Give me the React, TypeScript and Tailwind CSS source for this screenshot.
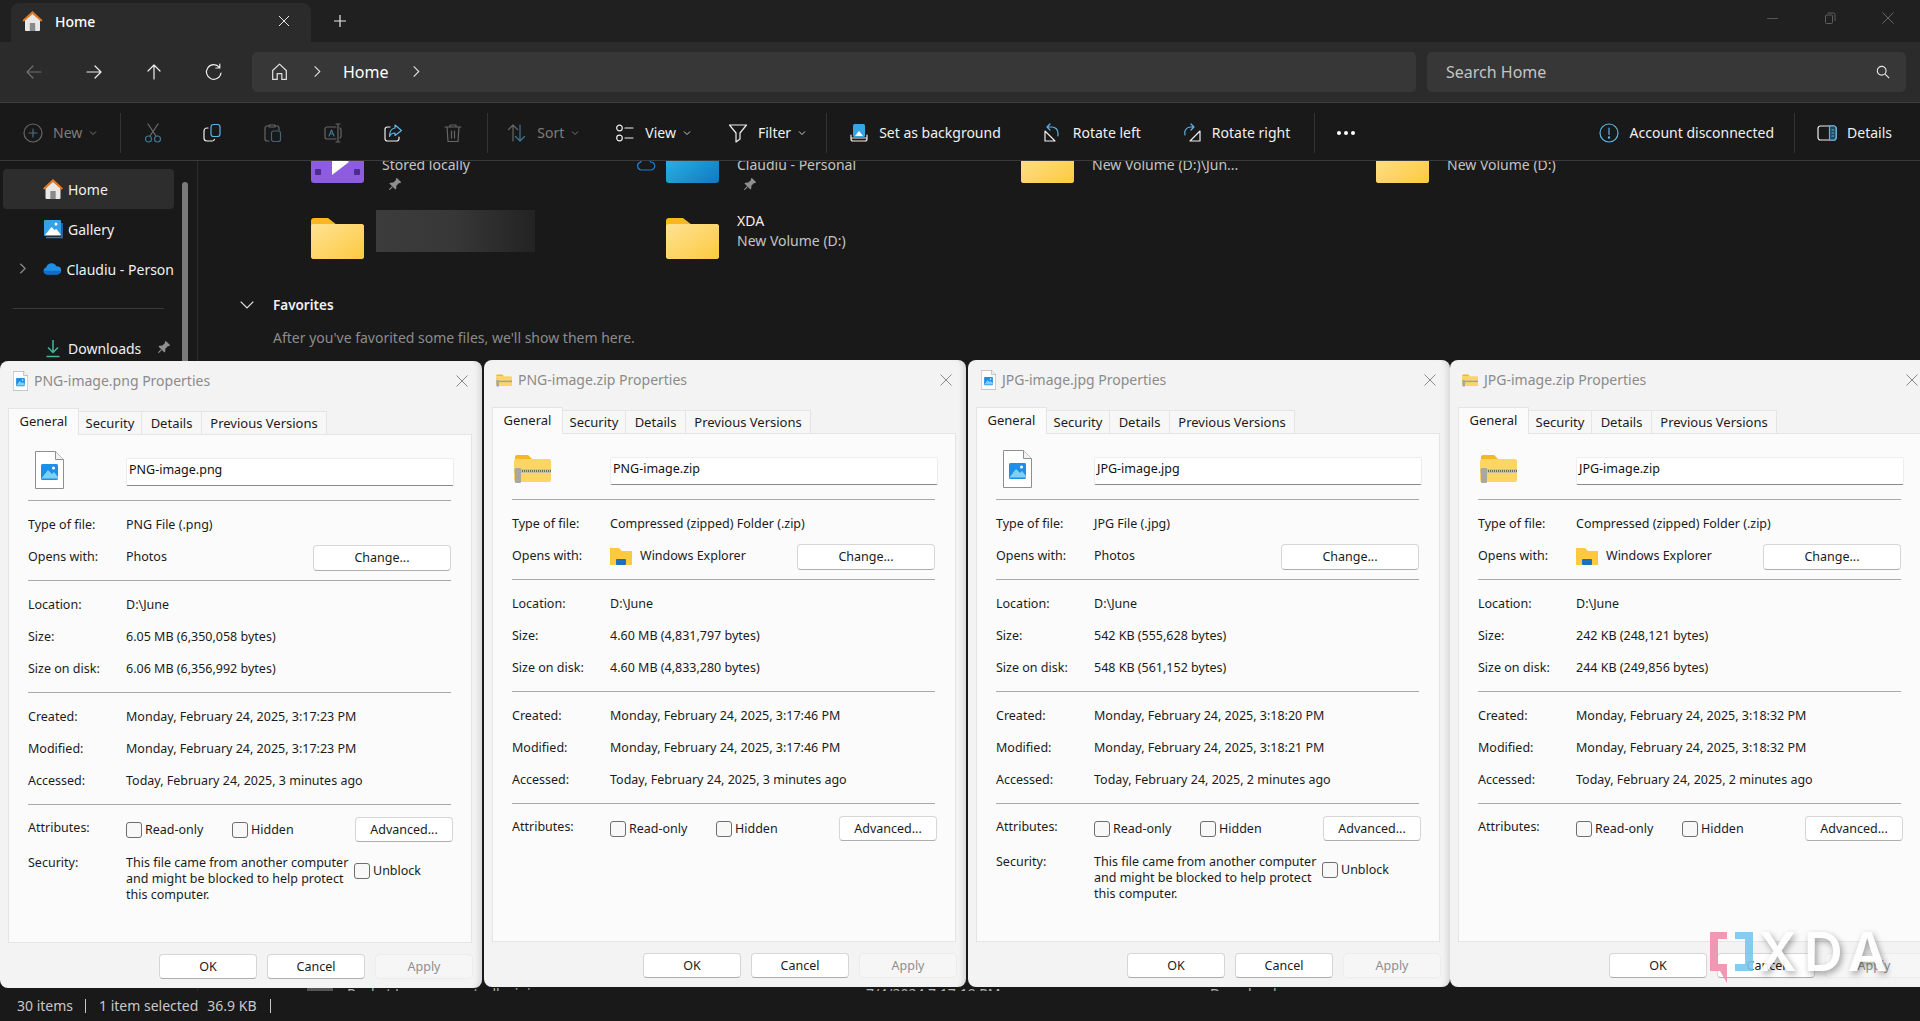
import type { ReactNode } from 'react';

/* Windows 11 File Explorer with four Properties dialogs on top */

function Folder({ className = 'w-[53px] h-[42px]' }: { className?: string }) {
  return (
    <svg viewBox="0 0 53 42" className={className}>
      <path d="M0 4a3 3 0 0 1 3-3h14l9 7v6H0z" fill="#f5b81f" />
      <rect y="7" width="53" height="35" rx="3" fill="#fbd15f" />
      <rect y="7" width="53" height="35" rx="3" fill="url(#folderShade)" />
      <defs>
        <linearGradient id="folderShade" x1="0" y1="0" x2="1" y2="1">
          <stop offset="0" stopColor="#ffe294" />
          <stop offset="1" stopColor="#fcc93f" />
        </linearGradient>
      </defs>
    </svg>
  );
}

function HomeColor({ className = 'w-5 h-5' }: { className?: string }) {
  return (
    <svg viewBox="0 0 20 20" className={`shrink-0 ${className}`}>
      <path d="M2.500 9 10 2.500 17.500 9v10a1 1 0 0 1-1 1h-13a1 1 0 0 1-1-1z" fill="#e8e8e8" />
      <rect x="7.300" y="12" width="5.400" height="8" fill="#8a8a8a" />
      <path d="M10 0 0 9.200l1.300 1.500L10 3l8.700 7.700L20 9.200z" fill="#e57a25" />
    </svg>
  );
}

function Pin({ className = '' }: { className?: string }) {
  return (
    <svg viewBox="0 0 15 15" className={`w-[14px] h-[14px] shrink-0 ${className}`}>
      <g transform="rotate(45 7.500 7.500)" fill="#8f8f8f">
        <path d="M4.200 0h6.600v1.400l-1 .8v4l2.200 2.400v1.300H3V8.600l2.200-2.400v-4l-1-.8z" />
        <path d="M6.900 9.900h1.200V14l-.6 1.200-.6-1.200z" />
      </g>
    </svg>
  );
}

function Stroke({ children, size = 20, className = '' }: { children: ReactNode; size?: number; className?: string }) {
  return (
    <svg
      viewBox="0 0 20 20"
      width={size}
      height={size}
      fill="none"
      strokeWidth="1.200"
      strokeLinecap="round"
      strokeLinejoin="round"
      className={`shrink-0 ${className}`}
    >
      {children}
    </svg>
  );
}

function Chevron({ color = '#bdbdbd' }: { color?: string }) {
  return (
    <svg viewBox="0 0 8 8" className="w-2 h-2 shrink-0 -ml-[3px]" fill="none" stroke={color} strokeWidth="1">
      <path d="M1 2.500 4 5.500 7 2.500" />
    </svg>
  );
}

function Sep({ className = '' }: { className?: string }) {
  return <div className={`w-px h-10 bg-[#333333] shrink-0 ${className}`} />;
}

function Tool({ label, icon, caret, dim, className = '' }: { label: string; icon: ReactNode; caret?: boolean; dim?: boolean; className?: string }) {
  return (
    <div className={`flex items-center gap-[10px] shrink-0 ${dim ? 'text-[#7d7d7d]' : 'text-[#f0f0f0]'} ${className}`}>
      {icon}
      <span>{label}</span>
      {caret && <Chevron color={dim ? '#777777' : '#cccccc'} />}
    </div>
  );
}

function ChevronRight() {
  return (
    <svg viewBox="0 0 8 14" className="w-2 h-[13px]" fill="none" stroke="currentColor" strokeWidth="1.200">
      <path d="M1.500 1.500 7 7l-5.500 5.500" />
    </svg>
  );
}

function TopBar() {
  return (
    <>
      <div className="h-[42px] bg-[#202020] flex items-end pl-[11px] text-white">
        <div className="w-[300px] h-[39px] bg-[#2b2b2b] rounded-t-lg flex items-center pl-[11px] pb-[3px]">
          <HomeColor className="w-[21px] h-5" />
          <span className="ml-[12px] text-[14px] font-medium">Home</span>
          <svg viewBox="0 0 12 12" className="w-3 h-3 ml-auto mr-[21px]" fill="none" stroke="#e8e8e8" strokeWidth="1">
            <path d="M1 1l10 10M11 1 1 11" />
          </svg>
        </div>
        <svg viewBox="0 0 12 12" className="w-3 h-3 ml-[23px] mb-[15px]" fill="none" stroke="#e8e8e8" strokeWidth="1.200">
          <path d="M6 0v12M0 6h12" />
        </svg>
        <div className="ml-auto flex items-center h-full pb-[6px] pr-[26px] gap-[46px]">
          <div className="w-[11px] h-px bg-[#555555]" />
          <svg viewBox="0 0 12 12" className="w-3 h-3" fill="none" stroke="#5e5e5e" strokeWidth="1">
            <rect x="1.500" y="3" width="7" height="8.500" rx="1" />
            <path d="M3.500 1h6a1.500 1.500 0 0 1 1.500 1.500V9" />
          </svg>
          <svg viewBox="0 0 12 12" className="w-3 h-3" fill="none" stroke="#666666" strokeWidth="1">
            <path d="M.500.500l11 11M11.500.500l-11 11" />
          </svg>
        </div>
      </div>
      <div className="h-[61px] bg-[#2b2b2b] border-b border-[#3d3d3d] flex items-center pb-[1px] text-white">
        <div className="flex items-center gap-[40px] pl-[24px] w-[252px] shrink-0">
          <Stroke><path d="M17 10H3M9 4l-6 6 6 6" stroke="#6f6f6f" /></Stroke>
          <Stroke><path d="M3 10h14M11 4l6 6-6 6" stroke="#eeeeee" /></Stroke>
          <Stroke><path d="M10 17V3M4 9l6-6 6 6" stroke="#eeeeee" /></Stroke>
          <Stroke><path d="M15.500 5.500A7.300 7.300 0 1 0 17 11M15.800 2v4h-4" stroke="#eeeeee" /></Stroke>
        </div>
        <div className="w-[1164px] h-10 rounded-[5px] bg-[#373737] flex items-center pl-[17px] text-[16px] shrink-0">
          <Stroke size={21}><path d="M3.500 9 10 3l6.500 6v8.500h-4.300V12H7.800v5.500H3.500z" stroke="#dddddd" /></Stroke>
          <span className="ml-[23px] text-[#dddddd]"><ChevronRight /></span>
          <span className="ml-[22px]">Home</span>
          <span className="ml-[23px] text-[#dddddd]"><ChevronRight /></span>
        </div>
        <div className="ml-[11px] w-[479px] h-10 rounded-[5px] bg-[#373737] flex items-center pl-[19px] pr-[16px] text-[16px] text-[#c4c4c4] shrink-0">
          <span>Search Home</span>
          <svg viewBox="0 0 16 16" className="w-[14px] h-[14px] ml-auto" fill="none" stroke="#e6e6e6" strokeWidth="1.300">
            <circle cx="6.500" cy="6.500" r="5" />
            <path d="m10.500 10.500 4.500 4.500" />
          </svg>
        </div>
      </div>
    </>
  );
}

function Toolbar() {
  return (
    <div className="h-[58px] bg-[#191919] border-b border-[#3b3b3b] flex items-center pt-[3px] text-[14px] leading-5">
      <Tool
        dim
        caret
        label="New"
        className="ml-[23px]"
        icon={
          <Stroke>
            <circle cx="10" cy="10" r="9" stroke="#666666" />
            <path d="M10 6v8M6 10h8" stroke="#4c6f80" />
          </Stroke>
        }
      />
      <Sep className="ml-[23px]" />
      <Stroke className="ml-[22px]">
        <path d="M5 1l8 12M15 1 7 13" stroke="#6e6e6e" />
        <circle cx="5.500" cy="16" r="3" stroke="#3f7592" />
        <circle cx="14.500" cy="16" r="3" stroke="#3f7592" />
      </Stroke>
      <Stroke className="ml-[39px]">
        <rect x="9" y="1.500" width="9" height="12" rx="2.500" stroke="#5cb4e6" />
        <path d="M6 5H5a3 3 0 0 0-3 3v7a3 3 0 0 0 3 3h5a3 3 0 0 0 2.500-1.500" stroke="#eeeeee" />
      </Stroke>
      <Stroke className="ml-[41px]">
        <path d="M6 3H4a2 2 0 0 0-2 2v11a2 2 0 0 0 2 2h2M12 3h2a2 2 0 0 1 2 2v2M6 2h6v2H6z" stroke="#666666" />
        <rect x="8.500" y="8" width="9" height="10.500" rx="2" stroke="#3f6478" />
      </Stroke>
      <Stroke className="ml-[40px]">
        <path d="M13 4H4a2 2 0 0 0-2 2v8a2 2 0 0 0 2 2h9M17 5a2 2 0 0 1 1 1.500v7a2 2 0 0 1-1 1.500M13 1h4M13 19h4M15 1v18" stroke="#666666" />
        <path d="M6 13l2.500-6L11 13M7 11h3" stroke="#3f7592" />
      </Stroke>
      <Stroke className="ml-[40px]">
        <path d="M7 4H4.500A2.500 2.500 0 0 0 2 6.500v9A2.500 2.500 0 0 0 4.500 18h9a2.500 2.500 0 0 0 2.500-2.500V14" stroke="#eeeeee" />
        <path d="M12 2l6.500 5.500-6.500 5V10C9.500 10 7.500 11 6.500 13.500 6.500 9 8.500 5.500 12 5z" stroke="#5cb4e6" />
      </Stroke>
      <Stroke className="ml-[40px]">
        <path d="M2 4h16M7 4V2h6v2M4 4l1 14.500h10L16 4M8.500 8v7M11.500 8v7" stroke="#666666" />
      </Stroke>
      <Sep className="ml-[24px]" />
      <Tool
        dim
        caret
        label="Sort"
        className="ml-[19px]"
        icon={
          <Stroke>
            <path d="M6 18V2M1.500 6.500 6 2l4.500 4.500" stroke="#666666" />
            <path d="M13 2v16M8.500 13.500 13 18l4.500-4.500" stroke="#3f7592" />
          </Stroke>
        }
      />
      <Tool
        caret
        label="View"
        className="ml-[36px]"
        icon={
          <Stroke>
            <circle cx="4.500" cy="5" r="2.800" stroke="#eeeeee" />
            <circle cx="4.500" cy="15" r="2.800" stroke="#eeeeee" />
            <path d="M10 5h8M10 15h8" stroke="#eeeeee" />
          </Stroke>
        }
      />
      <Tool
        caret
        label="Filter"
        className="ml-[37px]"
        icon={<Stroke><path d="M1.500 2h17l-6.500 8v6l-4 3v-9z" stroke="#eeeeee" /></Stroke>}
      />
      <Sep className="ml-[20px]" />
      <Tool
        label="Set as background"
        className="ml-[22px]"
        icon={
          <Stroke>
            <rect x="4" y="1" width="12" height="13" rx="1.500" fill="#37a4e4" stroke="none" />
            <path d="M6 13l4-5 4 5z" fill="#ffffff" stroke="none" />
            <path d="M2 12v4a2 2 0 0 0 2 2h12a2 2 0 0 0 2-2v-4M2 15h16" stroke="#eeeeee" />
          </Stroke>
        }
      />
      <Tool
        label="Rotate left"
        className="ml-[42px]"
        icon={
          <Stroke>
            <path d="M2 18V8l10 10z" stroke="#eeeeee" />
            <path d="M7 1 4 4l3 3M4 4h5a6 6 0 0 1 6 6v3" stroke="#5cb4e6" />
          </Stroke>
        }
      />
      <Tool
        label="Rotate right"
        className="ml-[41px]"
        icon={
          <Stroke>
            <path d="M18 18V8L8 18z" stroke="#eeeeee" />
            <path d="M9 1l3 3-3 3M12 4H8a6 6 0 0 0-5 8" stroke="#5cb4e6" />
          </Stroke>
        }
      />
      <Sep className="ml-[24px]" />
      <div className="ml-[22px] flex gap-[3px]">
        <i className="block w-[4px] h-[4px] rounded-full bg-white" />
        <i className="block w-[4px] h-[4px] rounded-full bg-white" />
        <i className="block w-[4px] h-[4px] rounded-full bg-white" />
      </div>
      <Tool
        label="Account disconnected"
        className="ml-auto"
        icon={
          <Stroke className="mr-[1px]">
            <circle cx="10" cy="10" r="9" stroke="#5cb4e6" />
            <path d="M10 5v6.500" stroke="#5cb4e6" />
            <circle cx="10" cy="14.500" r=".6" fill="#5cb4e6" stroke="#5cb4e6" />
          </Stroke>
        }
      />
      <Sep className="ml-[20px]" />
      <Tool
        label="Details"
        className="ml-[22px] mr-[28px]"
        icon={
          <Stroke>
            <rect x="1" y="3" width="18" height="14" rx="2.500" stroke="#eeeeee" />
            <path d="M12.500 3v14h4.500a2 2 0 0 0 2-2V5a2 2 0 0 0-2-2z" fill="#1f4a63" stroke="#5cb4e6" />
            <path d="M15 7h1.500M15 10h1.500M15 13h1.500" stroke="#5cb4e6" />
          </Stroke>
        }
      />
    </div>
  );
}

function NavRow({ icon, label, pin, selected, caret }: { icon: ReactNode; label: string; pin?: boolean; selected?: boolean; caret?: boolean }) {
  return (
    <div className={`relative h-10 ml-[3px] w-[171px] rounded flex items-center pl-[40px] text-[14px] whitespace-nowrap ${selected ? 'bg-[#2d2d2d]' : ''}`}>
      {caret && (
        <span className="absolute left-[16px] top-[13px] text-[#8a8a8a]">
          <svg viewBox="0 0 8 14" className="w-[7px] h-[13px]" fill="none" stroke="currentColor" strokeWidth="1.500">
            <path d="M1.500 1.500 7 7l-5.500 5.500" />
          </svg>
        </span>
      )}
      {icon}
      <span className="ml-[5px] text-[#f0f0f0]">{label}</span>
      {pin && <Pin className="ml-[15px]" />}
    </div>
  );
}

function Sidebar() {
  return (
    <div className="relative w-[198px] shrink-0 border-r border-[#2c2c2c] overflow-hidden pt-[8px]">
      <NavRow selected icon={<HomeColor />} label="Home" />
      <NavRow
        icon={
          <svg viewBox="0 0 20 20" className="w-5 h-5">
            <rect x="1" y="1" width="17" height="16" rx="1" fill="#35a1e6" />
            <path d="M2 16l6.500-8 3 3 2-1 4.500 6z" fill="#ffffff" />
            <circle cx="13" cy="5" r="1.500" fill="#ffffff" />
            <path d="M3 18.500h16V4" fill="none" stroke="#2c77c4" strokeWidth="1.500" />
          </svg>
        }
        label="Gallery"
      />
      <NavRow
        caret
        icon={
          <svg viewBox="0 0 20 14" className="w-5 h-[14px]">
            <path d="M4 13a4 4 0 0 1-.500-7.800A6 6 0 0 1 14.600 4 4.500 4.500 0 0 1 16 13z" fill="#1f8fe6" />
            <path d="M4 13a4 4 0 0 1-3-4h18a4 4 0 0 1-3 4z" fill="#0f6cc9" />
          </svg>
        }
        label="Claudiu - Person"
      />
      <div className="h-px w-[151px] ml-[13px] my-[19px] bg-[#3a3a3a]" />
      <NavRow
        pin
        icon={
          <svg viewBox="0 0 20 20" className="w-5 h-5" fill="none" stroke="#3fb89a" strokeWidth="1.500">
            <path d="M10 2v12M5 9.500l5 5 5-5M3.500 18.500h13" />
          </svg>
        }
        label="Downloads"
      />
      <div className="absolute left-[182px] top-[21px] w-[6px] h-[300px] rounded-full bg-[#7a7a7a]" />
    </div>
  );
}

function QuickItem({ icon, title, sub, pin, cloud }: { icon: ReactNode; title?: string; sub?: string; pin?: boolean; cloud?: boolean }) {
  return (
    <div className="relative flex gap-[18px]">
      {cloud && (
        <svg viewBox="0 0 20 14" className="absolute -left-[30px] top-[22px] w-5 h-[14px]" fill="none" stroke="#1f7fd0" strokeWidth="1.200">
          <path d="M5 13a4 4 0 0 1-.500-7.800A5.500 5.500 0 0 1 14.600 5 4 4 0 0 1 15 13z" />
        </svg>
      )}
      <div className="pt-[6px] shrink-0">{icon}</div>
      <div className="text-[14px] leading-5 whitespace-nowrap">
        <p className="h-5 text-[#f0f0f0]">{title}</p>
        <p className="text-[#c4c4c4]">{sub}</p>
        {pin && <Pin className="mt-[3px] ml-[5px]" />}
      </div>
    </div>
  );
}

function Explorer() {
  return (
    <div className="flex-1 flex min-h-0 bg-[#191919]">
      <Sidebar />
      <div className="relative flex-1 overflow-hidden">
        <div className="-mt-[26px] ml-[113px] grid grid-cols-[355px_355px_355px_355px] auto-rows-[76px]">
          <QuickItem
            pin
            sub="Stored locally"
            icon={
              <svg viewBox="0 0 53 42" className="w-[53px] h-[42px]">
                <rect width="53" height="42" rx="3" fill="#8e5ce0" />
                <path d="M21 8l17 13-17 13z" fill="#ffffff" />
                <g fill="#4d2d8c">
                  <rect x="4" y="6" width="6" height="6" rx="1" />
                  <rect x="4" y="28" width="6" height="6" rx="1" />
                  <rect x="43" y="6" width="6" height="6" rx="1" />
                  <rect x="43" y="28" width="6" height="6" rx="1" />
                </g>
              </svg>
            }
          />
          <QuickItem
            pin
            cloud
            sub="Claudiu - Personal"
            icon={
              <svg viewBox="0 0 53 42" className="w-[53px] h-[42px]">
                <defs>
                  <linearGradient id="blueFolder" x1="0" y1="0" x2="1" y2="1">
                    <stop offset="0" stopColor="#35c0e6" />
                    <stop offset="1" stopColor="#0d79c4" />
                  </linearGradient>
                </defs>
                <rect width="53" height="42" rx="3" fill="url(#blueFolder)" />
              </svg>
            }
          />
          <QuickItem sub="New Volume (D:)\Jun..." icon={<Folder />} />
          <QuickItem sub="New Volume (D:)" icon={<Folder />} />
          <div className="flex gap-[12px]">
            <div className="pt-[6px] shrink-0"><Folder /></div>
            <div className="w-[159px] h-[42px] -mt-px bg-gradient-to-r from-[#3c3c3c] via-[#373737] to-[#232323]" />
          </div>
          <QuickItem title="XDA" sub="New Volume (D:)" icon={<Folder />} />
        </div>
        <div className="flex items-center h-5 mt-[8px] pl-[42px] text-[13.500px]">
          <svg viewBox="0 0 14 8" className="w-[14px] h-2" fill="none" stroke="#e8e8e8" strokeWidth="1.200">
            <path d="M.700.700 7 7l6.300-6.300" />
          </svg>
          <span className="ml-[19px] font-semibold text-[#f0f0f0]">Favorites</span>
        </div>
        <p className="mt-[13px] pl-[75px] text-[14px] leading-5 text-[#8c8c8c]">After you've favorited some files, we'll show them here.</p>
        {/* list row that peeks out under the dialogs */}
        <div className="absolute left-[-198px] right-0 bottom-[-12px] h-5 flex items-center text-[14px] text-[#b4b4b4] whitespace-nowrap">
          <div className="ml-[54px] w-[18px] h-[14px] bg-[#d8c26c]" />
          <span className="ml-[7px] w-[228px]">My Folder</span>
          <div className="w-[26px] h-[14px] bg-[#555555]" />
          <span className="ml-[14px] w-[519px]">Rocket.League_controller.ini</span>
          <span className="w-[344px]">7/4/2024 7:17:19 PM</span>
          <span>Downloads</span>
        </div>
      </div>
    </div>
  );
}

function StatusBar() {
  return (
    <div className="h-[30px] bg-[#191919] flex items-center pl-[17px] pb-[1px] text-[14px] text-[#c8c8c8] relative">
      <span className="w-[68px]">30 items</span>
      <div className="w-px h-[14px] bg-[#c8c8c8]" />
      <span className="ml-[13px]">1 item selected</span>
      <span className="ml-[9px]">36.9 KB</span>
      <div className="ml-[13px] w-px h-[14px] bg-[#c8c8c8]" />
    </div>
  );
}

type DialogData = {
  left: string;
  top: string;
  name: string;
  type: string;
  zip: boolean;
  size: string;
  onDisk: string;
  created: string;
  modified: string;
  accessed: string;
  blocked: boolean;
};

const dialogs: DialogData[] = [
  {
    left: 'left-0',
    top: 'top-[361px]',
    name: 'PNG-image.png',
    type: 'PNG File (.png)',
    zip: false,
    size: '6.05 MB (6,350,058 bytes)',
    onDisk: '6.06 MB (6,356,992 bytes)',
    created: 'Monday, February 24, 2025, 3:17:23 PM',
    modified: 'Monday, February 24, 2025, 3:17:23 PM',
    accessed: 'Today, February 24, 2025, 3 minutes ago',
    blocked: true,
  },
  {
    left: 'left-[484px]',
    top: 'top-[360px]',
    name: 'PNG-image.zip',
    type: 'Compressed (zipped) Folder (.zip)',
    zip: true,
    size: '4.60 MB (4,831,797 bytes)',
    onDisk: '4.60 MB (4,833,280 bytes)',
    created: 'Monday, February 24, 2025, 3:17:46 PM',
    modified: 'Monday, February 24, 2025, 3:17:46 PM',
    accessed: 'Today, February 24, 2025, 3 minutes ago',
    blocked: false,
  },
  {
    left: 'left-[968px]',
    top: 'top-[360px]',
    name: 'JPG-image.jpg',
    type: 'JPG File (.jpg)',
    zip: false,
    size: '542 KB (555,628 bytes)',
    onDisk: '548 KB (561,152 bytes)',
    created: 'Monday, February 24, 2025, 3:18:20 PM',
    modified: 'Monday, February 24, 2025, 3:18:21 PM',
    accessed: 'Today, February 24, 2025, 2 minutes ago',
    blocked: true,
  },
  {
    left: 'left-[1450px]',
    top: 'top-[360px]',
    name: 'JPG-image.zip',
    type: 'Compressed (zipped) Folder (.zip)',
    zip: true,
    size: '242 KB (248,121 bytes)',
    onDisk: '244 KB (249,856 bytes)',
    created: 'Monday, February 24, 2025, 3:18:32 PM',
    modified: 'Monday, February 24, 2025, 3:18:32 PM',
    accessed: 'Today, February 24, 2025, 2 minutes ago',
    blocked: false,
  },
];

function ImageFile({ small }: { small?: boolean }) {
  return (
    <svg viewBox="0 0 29 38" className={small ? 'w-[15px] h-5' : 'w-[29px] h-[38px]'}>
      <path d="M.500.500h20l8 8v29H.500z" fill="#ffffff" stroke="#8f8f8f" />
      <path d="M20.500.500v8h8" fill="#f2f2f2" stroke="#8f8f8f" />
      <rect x="6" y="13" width="17" height="16" rx="1.500" fill="#1f8fe6" />
      <path d="M6 28l7-9 4 4 2-2 4 5v1.500H6z" fill="#7fd0f5" />
      <circle cx="18.500" cy="17" r="1.500" fill="#ffffff" />
    </svg>
  );
}

function ZipFolder({ small }: { small?: boolean }) {
  return (
    <svg viewBox="0 0 37 30" className={small ? 'w-[18px] h-[15px]' : 'w-[37px] h-[30px]'}>
      <path d="M1 3a2 2 0 0 1 2-2h11l5 5H1z" fill="#f5b81f" />
      <rect x="0" y="5" width="37" height="23" rx="2" fill="#fdd567" />
      <rect x="0" y="15" width="37" height="4" fill="#c7c2a4" />
      <path d="M6 17h31" stroke="#6d6d62" strokeWidth="2" strokeDasharray="1 1" />
      <rect x="1" y="14" width="6" height="15" rx="1" fill="#a8a8a0" />
    </svg>
  );
}

function InfoRow({ label, children }: { label: string; children: ReactNode }) {
  return (
    <div className="h-8 flex items-center pt-[1px]">
      <span className="w-[98px] shrink-0">{label}</span>
      {children}
    </div>
  );
}

function Divider() {
  return <div className="h-px ml-[19px] w-[423px] bg-[#a9a9a9]" />;
}

function WinButton({ label, disabled, className = '' }: { label: string; disabled?: boolean; className?: string }) {
  return (
    <div className={`h-[25px] flex items-center justify-center rounded-[4px] border shrink-0 ${disabled ? 'border-[#ececec] text-[#8e8e8e] bg-[#f6f6f6]' : 'border-[#d6d6d6] border-b-[#aeaeae] bg-white text-[#1b1b1b]'} ${className}`}>
      {label}
    </div>
  );
}

function Check({ label, className = '' }: { label: string; className?: string }) {
  return (
    <div className={`flex items-center gap-[3px] shrink-0 ${className}`}>
      <div className="w-4 h-4 rounded-[3px] border border-[#6e6e6e] bg-[#f8f8f8]" />
      <span>{label}</span>
    </div>
  );
}

function Dialog({ d }: { d: DialogData }) {
  return (
    <div className={`absolute ${d.left} ${d.top} w-[482px] h-[627px] bg-[#f3f3f3] rounded-lg text-[12.500px] leading-4 text-[#1b1b1b] whitespace-nowrap shadow-[inset_-7px_0_6px_-5px_rgba(0,0,0,0.14)]`}>
      <div className="h-[40px] flex items-center pl-[12px] pr-[14px] text-[14px] text-[#8b8b8b]">
        <div className="w-[16px] flex justify-center">{d.zip ? <ZipFolder small /> : <ImageFile small />}</div>
        <span className="ml-[6px]">{d.name} Properties</span>
        <svg viewBox="0 0 12 12" className="w-3 h-3 ml-auto" fill="none" stroke="#8a8a8a" strokeWidth="1">
          <path d="M.500.500l11 11M11.500.500l-11 11" />
        </svg>
      </div>
      <div className="flex items-end h-[33px] pl-[8px] relative z-10 text-[13px]">
        <div className="w-[71px] h-[27px] -mb-px bg-[#fbfbfb] border border-b-0 border-[#e5e5e5] flex justify-center pt-[4px]">General</div>
        <div className="w-[63px] h-[23px] bg-[#f7f7f7] border-t border-r border-[#e5e5e5] flex items-center justify-center">Security</div>
        <div className="w-[60px] h-[23px] bg-[#f7f7f7] border-t border-r border-[#e5e5e5] flex items-center justify-center">Details</div>
        <div className="w-[125px] h-[23px] bg-[#f7f7f7] border-t border-r border-[#e5e5e5] flex items-center justify-center">Previous Versions</div>
      </div>
      <div className="mx-[8px] w-[464px] h-[509px] bg-[#fbfbfb] border border-[#e5e5e5]">
        <div className="h-[65px] flex items-start pl-[19px] pt-[23px]">
          <div className="w-[98px] -mt-[7px] pl-[7px] h-[38px]">{d.zip ? <div className="pt-[4px] -ml-[5px]"><ZipFolder /></div> : <ImageFile />}</div>
          <div className="w-[328px] h-[28px] bg-white border border-[#ededed] border-b-[#8a8a8a] rounded-[2px] pl-[2px] pt-[3px] text-[#111111]">{d.name}</div>
        </div>
        <Divider />
        <div className="pl-[19px] pt-[7px] pb-[8px]">
          <InfoRow label="Type of file:">{d.type}</InfoRow>
          <InfoRow label="Opens with:">
            {d.zip && (
              <svg viewBox="0 0 22 18" className="w-[22px] h-[18px] mr-[8px]">
                <path d="M0 1h9l3 3h10v14H0z" fill="#fcc93f" />
                <rect x="6" y="12" width="10" height="6" rx="1" fill="#1f6fbf" />
              </svg>
            )}
            <span>{d.zip ? 'Windows Explorer' : 'Photos'}</span>
            <WinButton label="Change..." className="w-[138px] h-[26px] ml-auto mr-[20px] mt-[2px]" />
          </InfoRow>
        </div>
        <Divider />
        <div className="pl-[19px] pt-[7px] pb-[8px]">
          <InfoRow label="Location:">D:\June</InfoRow>
          <InfoRow label="Size:">{d.size}</InfoRow>
          <InfoRow label="Size on disk:">{d.onDisk}</InfoRow>
        </div>
        <Divider />
        <div className="pl-[19px] pt-[7px] pb-[8px]">
          <InfoRow label="Created:">{d.created}</InfoRow>
          <InfoRow label="Modified:">{d.modified}</InfoRow>
          <InfoRow label="Accessed:">{d.accessed}</InfoRow>
        </div>
        <Divider />
        <div className="pl-[19px] pt-[12px] h-[36px] flex items-start">
          <span className="w-[98px] shrink-0 mt-[3px]">Attributes:</span>
          <Check label="Read-only" className="mt-[5px] w-[106px]" />
          <Check label="Hidden" className="mt-[5px] w-[123px]" />
          <WinButton label="Advanced..." className="w-[98px]" />
        </div>
        {d.blocked && (
          <div className="pl-[19px] mt-[14px] flex items-start">
            <span className="w-[98px] shrink-0">Security:</span>
            <p className="w-[228px] shrink-0 whitespace-normal">This file came from another computer and might be blocked to help protect this computer.</p>
            <Check label="Unblock" className="mt-[8px]" />
          </div>
        )}
      </div>
      <div className="flex gap-[10px] pl-[159px] pt-[11px]">
        <WinButton label="OK" className="w-[98px]" />
        <WinButton label="Cancel" className="w-[98px]" />
        <WinButton label="Apply" disabled className="w-[98px]" />
      </div>
    </div>
  );
}

function XdaMark() {
  return (
    <div className="absolute left-[1710px] top-[932px] flex items-start pointer-events-none opacity-90">
      <svg viewBox="0 0 44 52" className="w-[44px] h-[52px] shrink-0">
        <path d="M0 0H17V7H8V32H17V51L10 39H0z" fill="#ef8fae" />
        <path d="M25 0H43V39H25V32H35V7H25z" fill="#7cc6ee" />
      </svg>
      <span className="ml-[4px] text-[54px] leading-[40px] font-semibold tracking-[7px] text-white [text-shadow:2px_3px_6px_rgba(0,0,0,0.4)] font-['Inter',sans-serif]">XDA</span>
    </div>
  );
}

export default function App() {
  return (
    <div className="relative w-screen h-screen overflow-hidden flex flex-col bg-[#191919] font-['Noto_Sans','Liberation_Sans',sans-serif]">
      <TopBar />
      <Toolbar />
      <Explorer />
      <StatusBar />
      {dialogs.map((d) => (
        <Dialog key={d.name} d={d} />
      ))}
      <XdaMark />
    </div>
  );
}
